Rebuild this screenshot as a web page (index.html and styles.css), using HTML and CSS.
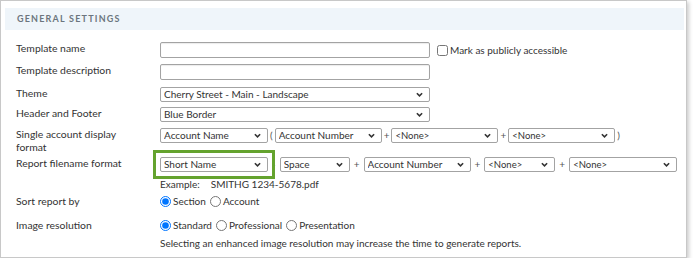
FILE: index.html
```html
<!DOCTYPE html>
<html lang="en">
	<head>
		<meta charset="UTF-8" />
		<meta name="viewport" content="width=device-width, initial-scale=1.0" />
		<title>General Settings</title>
		<link rel="stylesheet" href="styles.css">
	</head>
	<body>
		<div class="panel">
			<div class="panel-title">General Settings</div>
			<div class="form">
				<div class="row row-name">
					<div class="label">Template name</div>
					<div class="field">
						<input class="text" type="text" />
						<label class="check"><input type="checkbox" />Mark as publicly accessible</label>
					</div>
				</div>

				<div class="row row-desc">
					<div class="label">Template description</div>
					<div class="field"><input class="text" type="text" /></div>
				</div>

				<div class="row row-theme">
					<div class="label">Theme</div>
					<div class="field">
						<span class="sel w-wide"><select><option>Cherry Street - Main - Landscape</option></select><svg class="chev" viewBox="0 0 8 5"><path d="M1 1 L4 4 L7 1" /></svg></span>
					</div>
				</div>

				<div class="row row-header">
					<div class="label">Header and Footer</div>
					<div class="field">
						<span class="sel w-wide"><select><option>Blue Border</option></select><svg class="chev" viewBox="0 0 8 5"><path d="M1 1 L4 4 L7 1" /></svg></span>
					</div>
				</div>

				<div class="row row-single">
					<div class="label">Single account display format</div>
					<div class="field">
						<span class="sel w-108"><select><option>Account Name</option></select><svg class="chev" viewBox="0 0 8 5"><path d="M1 1 L4 4 L7 1" /></svg></span>
						<span class="sep">(</span>
						<span class="sel w-107"><select><option>Account Number</option></select><svg class="chev" viewBox="0 0 8 5"><path d="M1 1 L4 4 L7 1" /></svg></span>
						<span class="sep">+</span>
						<span class="sel w-107"><select class="small"><option>&lt;None&gt;</option></select><svg class="chev" viewBox="0 0 8 5"><path d="M1 1 L4 4 L7 1" /></svg></span>
						<span class="sep">+</span>
						<span class="sel w-107"><select class="small"><option>&lt;None&gt;</option></select><svg class="chev" viewBox="0 0 8 5"><path d="M1 1 L4 4 L7 1" /></svg></span>
						<span class="sep">)</span>
					</div>
				</div>

				<div class="row row-file">
					<div class="label">Report filename format</div>
					<div class="field">
						<span class="sel w-108 highlight"><select><option>Short Name</option></select><svg class="chev" viewBox="0 0 8 5"><path d="M1 1 L4 4 L7 1" /></svg></span>
						<span class="sep wide dash">-</span>
						<span class="sel w-70"><select><option>Space</option></select><svg class="chev" viewBox="0 0 8 5"><path d="M1 1 L4 4 L7 1" /></svg></span>
						<span class="sep wide">+</span>
						<span class="sel w-107"><select><option>Account Number</option></select><svg class="chev" viewBox="0 0 8 5"><path d="M1 1 L4 4 L7 1" /></svg></span>
						<span class="sep wide">+</span>
						<span class="sel w-71"><select class="small"><option>&lt;None&gt;</option></select><svg class="chev" viewBox="0 0 8 5"><path d="M1 1 L4 4 L7 1" /></svg></span>
						<span class="sep wide">+</span>
						<span class="sel w-108"><select class="small"><option>&lt;None&gt;</option></select><svg class="chev" viewBox="0 0 8 5"><path d="M1 1 L4 4 L7 1" /></svg></span>
					</div>
				</div>

				<div class="row row-example">
					<div class="label"></div>
					<div class="field example"><span class="example-key">Example:</span>SMITHG 1234-5678.pdf</div>
				</div>

				<div class="row row-sort">
					<div class="label">Sort report by</div>
					<div class="field">
						<label class="radio"><input type="radio" name="sort" checked />Section</label>
						<label class="radio"><input type="radio" name="sort" />Account</label>
					</div>
				</div>

				<div class="row row-res">
					<div class="label">Image resolution</div>
					<div class="field stack">
						<div class="options">
							<label class="radio"><input type="radio" name="res" checked />Standard</label>
							<label class="radio"><input type="radio" name="res" />Professional</label>
							<label class="radio"><input type="radio" name="res" />Presentation</label>
						</div>
						<div class="note">Selecting an enhanced image resolution may increase the time to generate reports.</div>
					</div>
				</div>
			</div>
		</div>
	</body>
</html>
```

FILE: styles.css
```css
body {
	margin: 0;
	background-color: #fff;
	font-family: Lato, "Open Sans", Arial, sans-serif;
	font-size: 10px;
	color: #333;
}

.panel {
	width: 687px;
	border: 1px solid #c8c8c8;
	box-shadow: 2px 2px 4px rgba(0, 0, 0, 0.2);
	padding: 7px 2px 6px 4px;
	box-sizing: border-box;
	height: 258px;
}

.panel-title {
	height: 22px;
	line-height: 22px;
	padding-left: 12px;
	background-color: #eff5fa;
	color: #6c757e;
	font-size: 9px;
	font-weight: bold;
	letter-spacing: 1.2px;
	text-transform: uppercase;
}

.form {
	padding: 12px 0 0 11px;
}

.row {
	display: flex;
	align-items: flex-start;
}

.label {
	width: 144px;
	flex-shrink: 0;
	font-size: 10.4px;
	line-height: 13px;
	padding-right: 20px;
	box-sizing: border-box;
}

.field {
	display: flex;
	align-items: center;
	line-height: 13px;
}

.row-desc { margin-top: 6px; }
.row-theme { margin-top: 7px; }
.row-header { margin-top: 5px; }
.row-single { margin-top: 6px; }
.row-file { margin-top: 3px; }
.row-example { margin-top: 6px; }
.row-sort { margin-top: 4px; }
.row-res { margin-top: 11px; }

.text {
	width: 270px;
	height: 16px;
	border: 1px solid #a3a3a3;
	border-radius: 2px;
	box-shadow: inset 0 1px 1px rgba(0, 0, 0, 0.08);
	padding: 0;
	margin: 0;
	box-sizing: border-box;
}

.check {
	display: flex;
	align-items: center;
	margin-left: 7px;
}

.check input {
	width: 11px;
	height: 11px;
	margin: 0 2px 0 0;
}

.sel {
	position: relative;
	display: inline-block;
	height: 15px;
}

.sel select {
	appearance: none;
	-webkit-appearance: none;
	width: 100%;
	height: 15px;
	border: 1px solid #a3a3a3;
	border-radius: 2px;
	background-color: #fff;
	font-family: inherit;
	font-size: 10px;
	color: #333;
	padding: 0 0 0 3px;
	margin: 0;
	line-height: 13px;
	box-sizing: border-box;
}

.sel select.small {
	font-size: 9.5px;
}

.chev {
	position: absolute;
	right: 7px;
	top: 5px;
	width: 7px;
	height: 5px;
	fill: none;
	stroke: #333;
	stroke-width: 1.8;
}

.w-wide { width: 270px; }
.w-108 { width: 108px; }
.w-107 { width: 107px; }
.w-71 { width: 71px; }
.w-70 { width: 70px; }

.highlight {
	outline: 3px solid #64a32e;
	outline-offset: 4px;
}

.sep {
	margin: 0 2px;
	color: #555;
}

.sep.wide {
	margin: 0 4px;
}

.sep.dash {
	color: #bbb;
}

.example-key {
	margin-right: 11px;
}

.radio {
	display: flex;
	align-items: center;
	margin-right: 4px;
}

.radio input {
	width: 11px;
	height: 11px;
	margin: 0 2px 0 0;
}

.stack {
	flex-direction: column;
	align-items: flex-start;
}

.options {
	display: flex;
	align-items: center;
}

.note {
	margin-top: 5px;
}
```
